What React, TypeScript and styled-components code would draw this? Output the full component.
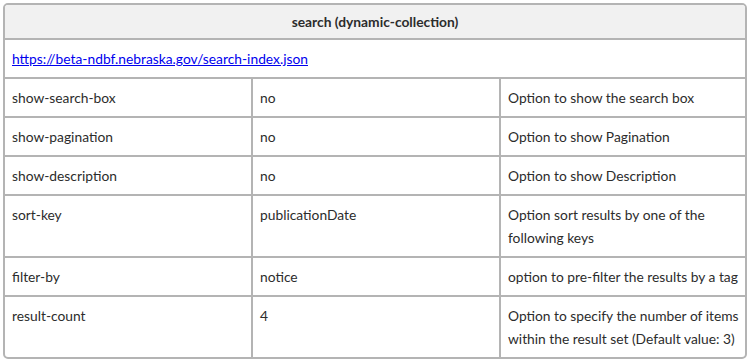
import React from 'react';
import styled, { createGlobalStyle } from 'styled-components';

const GlobalStyle = createGlobalStyle`
  body {
    margin: 0;
    background: #fff;
    font-family: 'Lato', 'Liberation Sans', sans-serif;
    color: #2c2c2c;
  }
`;

const Page = styled.div`
  padding: 3px;
`;

const Table = styled.table`
  width: 744px;
  border-collapse: separate;
  border-spacing: 0;
  border: 2px solid #b4b4b4;
  border-radius: 5px;
  overflow: hidden;
  table-layout: fixed;
  font-size: 13.8px;
  line-height: 23px;
`;

const Col = styled.col<{ $width: number }>`
  width: ${(p) => p.$width}px;
`;

const HeadCell = styled.th`
  background: #f1f1f1;
  font-weight: 700;
  text-align: center;
  padding: 5px 7px 5px;
  border-bottom: 2px solid #b4b4b4;
`;

const Cell = styled.td<{ $last?: boolean; $bottom?: boolean }>`
  padding: 7px 2px 7px 7px;
  vertical-align: top;
  text-align: left;
  border-right: ${(p) => (p.$last ? 'none' : '2px solid #b4b4b4')};
  border-bottom: ${(p) => (p.$bottom ? 'none' : '2px solid #b4b4b4')};
`;

const Link = styled.a`
  color: #0000ee;
  text-decoration: underline;
`;

const rows: [string, string, string][] = [
  ['show-search-box', 'no', 'Option to show the search box'],
  ['show-pagination', 'no', 'Option to show Pagination'],
  ['show-description', 'no', 'Option to show Description'],
  ['sort-key', 'publicationDate', 'Option sort results by one of the following keys'],
  ['filter-by', 'notice', 'option to pre-filter the results by a tag'],
  ['result-count', '4', 'Option to specify the number of items within the result set (Default value: 3)'],
];

export default function App() {
  return (
    <Page>
      <GlobalStyle />
      <Table>
        <colgroup>
          <Col $width={248} />
          <Col $width={248} />
          <Col $width={244} />
        </colgroup>
        <thead>
          <tr>
            <HeadCell colSpan={3}>search (dynamic-collection)</HeadCell>
          </tr>
        </thead>
        <tbody>
          <tr>
            <Cell colSpan={3} $last>
              <Link href="#">https://beta-ndbf.nebraska.gov/search-index.json</Link>
            </Cell>
          </tr>
          {rows.map(([key, value, desc], i) => {
            const bottom = i === rows.length - 1;
            return (
              <tr key={key}>
                <Cell $bottom={bottom}>{key}</Cell>
                <Cell $bottom={bottom}>{value}</Cell>
                <Cell $bottom={bottom} $last>
                  {desc}
                </Cell>
              </tr>
            );
          })}
        </tbody>
      </Table>
    </Page>
  );
}
